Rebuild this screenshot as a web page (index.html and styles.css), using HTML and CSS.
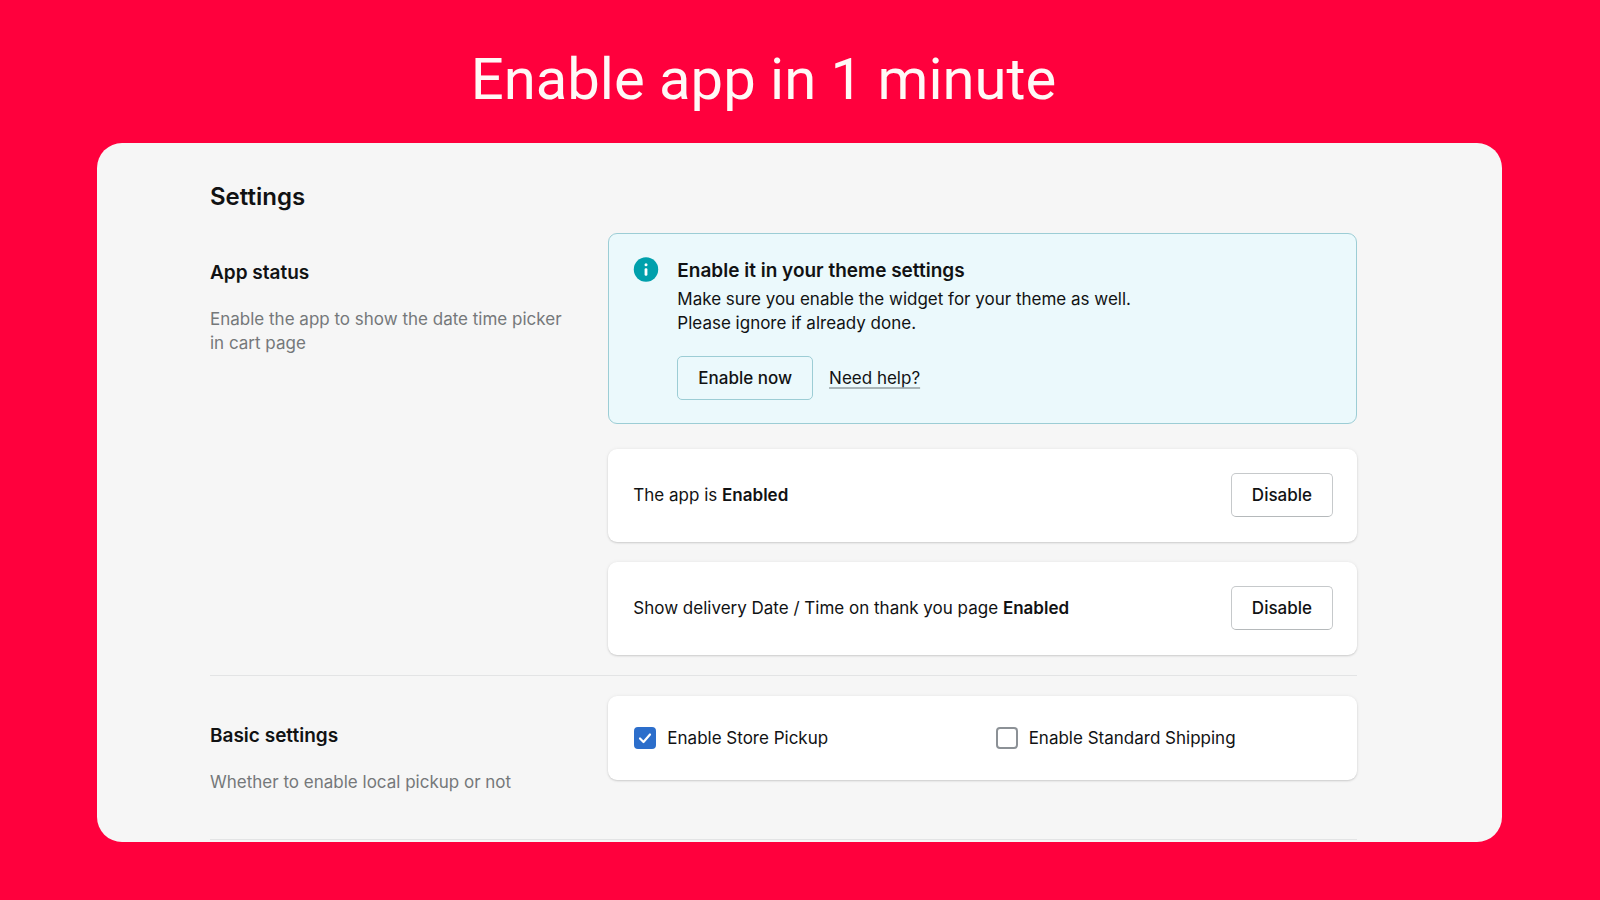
FILE: index.html
```html
<!DOCTYPE html>
<html lang="en">
<head>
    <meta charset="UTF-8">
    <meta name="viewport" content="width=device-width, initial-scale=1.0">
    <title>Enable app in 1 minute</title>
    <link rel="stylesheet" href="styles.css">
</head>
<body>

    <header class="hero">
        <h1>Enable app in 1 minute</h1>
    </header>

    <main class="panel">
        <h2 class="page-title">Settings</h2>

        <section class="section">
            <div class="section-info">
                <h3>App status</h3>
                <p>Enable the app to show the date time picker in cart page</p>
            </div>
            <div class="section-content">
                <div class="banner">
                    <svg class="banner-icon" width="26" height="26" viewBox="0 0 26 26" fill="none" xmlns="http://www.w3.org/2000/svg">
                        <circle cx="13" cy="12.5" r="12.2" fill="#00a0ac"/>
                        <circle cx="13" cy="7.8" r="1.5" fill="white"/>
                        <rect x="11.6" y="11.2" width="2.8" height="7.6" rx="1.2" fill="white"/>
                    </svg>
                    <div class="banner-body">
                        <h4>Enable it in your theme settings</h4>
                        <p>Make sure you enable the widget for your theme as well.<br>Please ignore if already done.</p>
                        <div class="banner-actions">
                            <button type="button" class="btn btn-banner">Enable now</button>
                            <a href="#" class="help-link">Need help?</a>
                        </div>
                    </div>
                </div>

                <div class="card">
                    <p>The app is <strong>Enabled</strong></p>
                    <button type="button" class="btn">Disable</button>
                </div>

                <div class="card">
                    <p>Show delivery Date / Time on thank you page <strong>Enabled</strong></p>
                    <button type="button" class="btn">Disable</button>
                </div>
            </div>
        </section>

        <section class="section">
            <div class="section-info">
                <h3>Basic settings</h3>
                <p>Whether to enable local pickup or not</p>
            </div>
            <div class="section-content">
                <div class="card card-options">
                    <div class="option">
                        <span class="checkbox">
                            <input type="checkbox" id="store-pickup" checked>
                            <svg width="22" height="22" viewBox="0 0 22 22" fill="none" xmlns="http://www.w3.org/2000/svg">
                                <path d="M6 11.5L9.5 15L16 7.5" stroke="white" stroke-width="2.2" stroke-linecap="round" stroke-linejoin="round"/>
                            </svg>
                        </span>
                        <label for="store-pickup">Enable Store Pickup</label>
                    </div>
                    <div class="option">
                        <span class="checkbox">
                            <input type="checkbox" id="standard-shipping">
                        </span>
                        <label for="standard-shipping">Enable Standard Shipping</label>
                    </div>
                </div>
            </div>
        </section>
    </main>

</body>
</html>
```
FILE: styles.css
```css
:root {
    --page-bg: #ff003d;
    --panel-bg: #f6f6f6;
    --text-color: #111213;
    --text-secondary: #75787a;
    --border-color: #e3e4e5;
    --button-border: #c6c9cb;
    --banner-bg: #ebf9fc;
    --banner-border: #9ccdd5;
    --primary-color: #2c6ecb;
}

* {
    margin: 0;
    padding: 0;
    box-sizing: border-box;
}

body {
    min-height: 100vh;
    padding: 0 98px 58px 97px;
    background: var(--page-bg);
    color: var(--text-color);
    font-family: Inter, "Liberation Sans", sans-serif;
    font-size: 17px;
    line-height: 24px;
}

.hero {
    padding: 43px 72px 28px 0;
    text-align: center;
}

.hero h1 {
    color: #fff8f6;
    font-family: Roboto, sans-serif;
    font-size: 58px;
    font-weight: 400;
    line-height: 72px;
}

.panel {
    padding: 38px 145px 2px 113px;
    background: var(--panel-bg);
    border-radius: 25px;
}

.page-title {
    margin-bottom: 20px;
    font-size: 24px;
    font-weight: 600;
    line-height: 32px;
}

.section {
    display: grid;
    grid-template-columns: 1fr 2fr;
    gap: 24px;
    padding-bottom: 20px;
    margin-bottom: 20px;
    border-bottom: 1px solid var(--border-color);
}

.section:last-child {
    padding-bottom: 45px;
    margin-bottom: 0;
}

.section-info {
    padding: 28px 20px 0 0;
}

.section-info h3 {
    margin-bottom: 22px;
    font-size: 19px;
    font-weight: 600;
}

.section-info p {
    color: var(--text-secondary);
}

.section-content {
    display: flex;
    flex-direction: column;
    gap: 20px;
}

.banner {
    display: flex;
    gap: 18px;
    margin-bottom: 5px;
    padding: 23px 24px;
    background: var(--banner-bg);
    border: 1px solid var(--banner-border);
    border-radius: 9px;
}

.banner-icon {
    flex: none;
}

.banner-body {
    padding-top: 2px;
}

.banner h4 {
    margin-bottom: 4px;
    font-size: 19px;
    font-weight: 600;
}

.banner-actions {
    display: flex;
    align-items: center;
    gap: 16px;
    margin-top: 21px;
}

.help-link {
    color: var(--text-color);
    text-decoration-color: #a9b5b8;
    text-decoration-thickness: 2px;
    text-underline-offset: 3px;
}

.btn {
    height: 44px;
    padding: 0 20px;
    background: #fff;
    border: 1px solid var(--button-border);
    border-bottom-color: #b5b9bb;
    border-radius: 5px;
    color: var(--text-color);
    font-family: inherit;
    font-size: 17px;
    font-weight: 500;
    line-height: 24px;
    cursor: pointer;
}

.btn-banner {
    background: transparent;
    border-color: var(--banner-border);
}

.card {
    display: flex;
    align-items: center;
    justify-content: space-between;
    padding: 24px 24px 25px 25px;
    background: #fff;
    border-radius: 9px;
    box-shadow: 0 0 4px rgba(23, 24, 24, 0.05), 0 1px 2px rgba(0, 0, 0, 0.15);
}

.card strong {
    font-weight: 600;
}

.card-options {
    display: grid;
    grid-template-columns: 1fr 1fr;
    gap: 24px;
    padding: 30px 24px 30px 26px;
}

.option {
    display: flex;
    align-items: center;
    gap: 11px;
}

.checkbox {
    position: relative;
    width: 22px;
    height: 22px;
}

.checkbox input {
    display: block;
    width: 22px;
    height: 22px;
    appearance: none;
    background: #fff;
    border: 2px solid #8c9196;
    border-radius: 4px;
    cursor: pointer;
}

.checkbox input:checked {
    background: var(--primary-color);
    border-color: var(--primary-color);
}

.checkbox svg {
    position: absolute;
    top: 0;
    left: 0;
    pointer-events: none;
}

@media (max-width: 900px) {
    body {
        padding: 0 20px 20px;
    }

    .hero {
        padding-right: 0;
    }

    .panel {
        padding: 38px 24px 2px;
    }

    .section {
        grid-template-columns: 1fr;
    }
}
```
